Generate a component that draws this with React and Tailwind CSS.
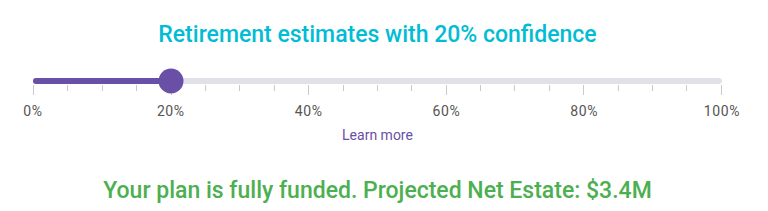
import { Fragment } from "react";

/* ─── Escala del slider ─────────────────────────────────────────── */
const ticks = Array.from({ length: 21 }, (_, i) => i * 5);
const labels = [0, 20, 40, 60, 80, 100];
const value = 20;

function ConfidenceSlider() {
  return (
    <div className="w-[689px]">
      {/* pista + thumb */}
      <div className="relative h-[6px] rounded-full bg-[#e4e0ea]">
        <div className="h-full rounded-full bg-[#6a4fa6]" style={{ width: `${value}%` }} />
        <span
          className="absolute top-1/2 w-[25px] h-[25px] -translate-x-1/2 -translate-y-1/2 rounded-full bg-[#6a4fa6]"
          style={{ left: `${value}%` }}
        />
      </div>
      {/* marcas */}
      <div className="flex justify-between items-start mt-[1px]">
        {ticks.map((t) => (
          <span key={t} className={`w-px bg-[#c9c9c9] ${t % 20 === 0 ? "h-[10px]" : "h-[6px]"}`} />
        ))}
      </div>
      {/* etiquetas */}
      <div className="flex justify-between mt-[8px]">
        {labels.map((l) => (
          <span key={l} className="w-0 flex justify-center">
            <span className="text-[14px] leading-4 tracking-[0.6px] text-[#555] whitespace-nowrap">{l}%</span>
          </span>
        ))}
      </div>
    </div>
  );
}

export default function App() {
  return (
    <div className="w-[768px] h-[211px] bg-white font-['Roboto',sans-serif] pl-[33px] pt-[21px]">
      <div className="w-[689px] flex flex-col items-center">
        <h1 className="text-[23px] leading-7 font-medium text-[#00bcd4]">
          Retirement estimates with 20% confidence
        </h1>
        <div className="mt-[29px]">
          <ConfidenceSlider />
        </div>
        <a className="mt-[8px] text-[14px] leading-4 text-[#6a4fa6] cursor-pointer">Learn more</a>
        <p className="mt-[34px] text-[23px] leading-7 font-medium text-[#4caf50]">
          Your plan is fully funded. Projected Net Estate: $3.4M
        </p>
      </div>
    </div>
  );
}
